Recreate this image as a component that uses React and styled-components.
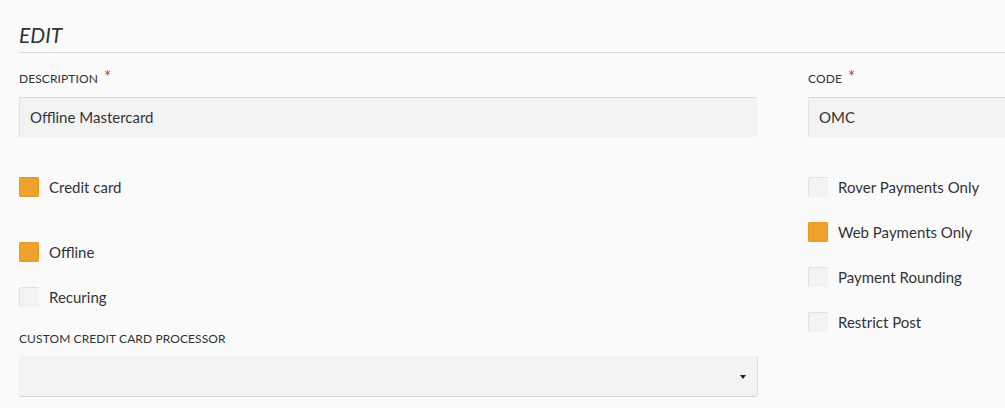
import React from "react";
import styled, { createGlobalStyle } from "styled-components";

const Global = createGlobalStyle`
  html, body { margin: 0; padding: 0; background: #fafafa; overflow: hidden; }
  body { font-family: Lato, "Open Sans", sans-serif; color: #333; }
  * { box-sizing: border-box; }
`;

const Page = styled.div`
  width: 1005px;
  height: 408px;
  overflow: hidden;
  padding: 0 0 0 19px;
`;

const Title = styled.h2`
  margin: 0;
  padding-top: 24px;
  height: 53px;
  font-size: 21px;
  font-weight: 400;
  font-style: italic;
  color: #333;
  line-height: 22px;
  border-bottom: 1px solid #dcdcdc;
`;

const Grid = styled.div`
  display: grid;
  grid-template-columns: 738px 738px;
  column-gap: 51px;
  padding-top: 19px;
`;

const Column = styled.div`
  display: flex;
  flex-direction: column;
`;

const Label = styled.label`
  display: block;
  font-size: 12px;
  text-transform: uppercase;
  color: #333;
  height: ${(p) => p.$h || 25}px;
  margin-top: ${(p) => p.$mt || 0}px;
  line-height: 14px;
  letter-spacing: 0.1px;
`;

const Req = styled.span`
  color: #d9302c;
  margin-left: 6px;
  font-size: 17px;
  line-height: 10px;
  position: relative;
  top: 0px;
`;

const Input = styled.div`
  height: 40px;
  background: #f3f3f3;
  border-top: 1px solid #dadada;
  border-left: 1px solid #e2e2e2;
  padding: 0 10px 2px;
  display: flex;
  align-items: center;
  font-size: 15px;
  color: #333;
`;

const CheckList = styled.div`
  display: flex;
  flex-direction: column;
  padding-top: ${(p) => p.$top}px;
`;

const CheckRow = styled.div`
  display: flex;
  align-items: center;
  height: 20px;
  margin-bottom: ${(p) => p.$gap}px;
  font-size: 15px;
  color: #333;
`;

const Box = styled.span`
  width: 20px;
  height: 20px;
  border-radius: 2px;
  margin-right: 10px;
  flex: none;
  background: ${(p) => (p.$on ? "#f0a02d" : "#f3f3f3")};
  box-shadow: ${(p) =>
    p.$on ? "inset 0 0 0 1px #e5982a" : "inset 1px 1px 0 #e0e0e0"};
`;

const Select = styled.div`
  height: 40px;
  background: #f3f3f3;
  border-radius: 2px;
  box-shadow: 0 1px 0 #d4d4d4, 1px 0 0 #dedede;
  display: flex;
  align-items: center;
  justify-content: flex-end;
  padding-right: 10px;
`;

const Caret = styled.span`
  width: 0;
  height: 0;
  border-left: 3.5px solid transparent;
  border-right: 3.5px solid transparent;
  border-top: 4px solid #222;
  margin-top: 1px;
  margin-right: 1px;
`;

const Check = ({ on, label, gap }) => (
  <CheckRow $gap={gap}>
    <Box $on={on} />
    {label}
  </CheckRow>
);

export default function App() {
  return (
    <>
      <Global />
      <Page>
        <Title>EDIT</Title>
        <Grid>
          <Column>
            <Label>
              Description<Req>*</Req>
            </Label>
            <Input>Offline Mastercard</Input>
            <CheckList $top={40}>
              <Check on label="Credit card" gap={45} />
              <Check on label="Offline" gap={25} />
              <Check label="Recuring" gap={24} />
            </CheckList>
            <Label $mt={1} $h={24}>
              Custom credit card processor
            </Label>
            <Select>
              <Caret />
            </Select>
          </Column>
          <Column>
            <Label>
              Code<Req>*</Req>
            </Label>
            <Input>OMC</Input>
            <CheckList $top={40}>
              <Check label="Rover Payments Only" gap={25} />
              <Check on label="Web Payments Only" gap={25} />
              <Check label="Payment Rounding" gap={25} />
              <Check label="Restrict Post" gap={25} />
            </CheckList>
          </Column>
        </Grid>
      </Page>
    </>
  );
}
